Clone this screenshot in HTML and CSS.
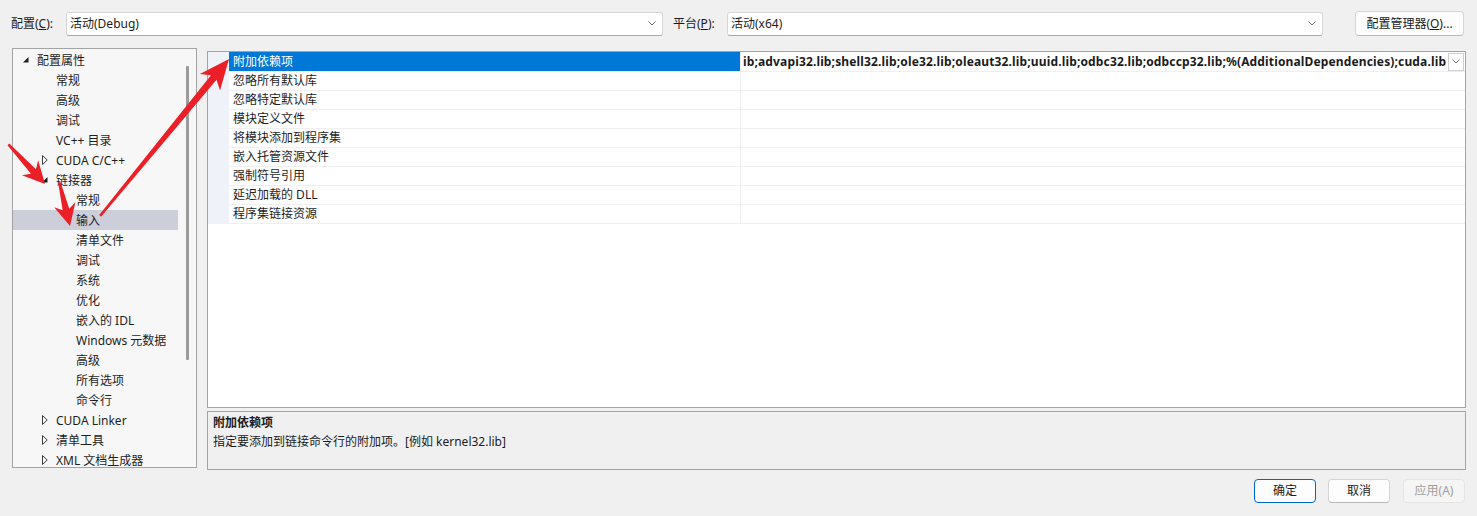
FILE: index.html
```html
<!DOCTYPE html>
<html lang="zh-CN">
<head>
<meta charset="utf-8">
<title>属性页</title>
<link rel="stylesheet" href="styles.css">
</head>
<body>
<div class="dialog">
  <div class="toolbar">
    <span class="lbl lbl-config">配置(<u>C</u>):</span>
    <div class="combo combo-config">
      <span class="combo-text">活动(Debug)</span>
      <svg class="chev" width="8" height="5" viewBox="0 0 8 5"><polyline points="0.5,0.5 4,4 7.5,0.5" fill="none" stroke="#707070" stroke-width="1"/></svg>
    </div>
    <span class="lbl lbl-platform">平台(<u>P</u>):</span>
    <div class="combo combo-platform">
      <span class="combo-text">活动(x64)</span>
      <svg class="chev" width="8" height="5" viewBox="0 0 8 5"><polyline points="0.5,0.5 4,4 7.5,0.5" fill="none" stroke="#707070" stroke-width="1"/></svg>
    </div>
    <button class="btn btn-manager">配置管理器(<u>O</u>)...</button>
  </div>

  <div class="main">
    <div class="tree">
      <ul class="tree-list">
        <li class="node l0"><span class="tg"><svg width="6" height="6" viewBox="0 0 6 6"><polygon points="5.5,0 5.5,5.5 0,5.5" fill="#1e1e1e"/></svg></span><span>配置属性</span></li>
        <li class="node l1"><span class="tg"></span><span>常规</span></li>
        <li class="node l1"><span class="tg"></span><span>高级</span></li>
        <li class="node l1"><span class="tg"></span><span>调试</span></li>
        <li class="node l1"><span class="tg"></span><span>VC++ 目录</span></li>
        <li class="node l1"><span class="tg"><svg width="6" height="10" viewBox="0 0 6 10"><polygon points="0.5,0.5 5.2,5 0.5,9.5" fill="none" stroke="#3a3a3a" stroke-width="1"/></svg></span><span>CUDA C/C++</span></li>
        <li class="node l1"><span class="tg"><svg width="6" height="6" viewBox="0 0 6 6"><polygon points="5.5,0 5.5,5.5 0,5.5" fill="#1e1e1e"/></svg></span><span>链接器</span></li>
        <li class="node l2"><span class="tg"></span><span>常规</span></li>
        <li class="node l2 selected"><span class="tg"></span><span>输入</span></li>
        <li class="node l2"><span class="tg"></span><span>清单文件</span></li>
        <li class="node l2"><span class="tg"></span><span>调试</span></li>
        <li class="node l2"><span class="tg"></span><span>系统</span></li>
        <li class="node l2"><span class="tg"></span><span>优化</span></li>
        <li class="node l2"><span class="tg"></span><span>嵌入的 IDL</span></li>
        <li class="node l2"><span class="tg"></span><span>Windows 元数据</span></li>
        <li class="node l2"><span class="tg"></span><span>高级</span></li>
        <li class="node l2"><span class="tg"></span><span>所有选项</span></li>
        <li class="node l2"><span class="tg"></span><span>命令行</span></li>
        <li class="node l1"><span class="tg"><svg width="6" height="10" viewBox="0 0 6 10"><polygon points="0.5,0.5 5.2,5 0.5,9.5" fill="none" stroke="#3a3a3a" stroke-width="1"/></svg></span><span>CUDA Linker</span></li>
        <li class="node l1"><span class="tg"><svg width="6" height="10" viewBox="0 0 6 10"><polygon points="0.5,0.5 5.2,5 0.5,9.5" fill="none" stroke="#3a3a3a" stroke-width="1"/></svg></span><span>清单工具</span></li>
        <li class="node l1"><span class="tg"><svg width="6" height="10" viewBox="0 0 6 10"><polygon points="0.5,0.5 5.2,5 0.5,9.5" fill="none" stroke="#3a3a3a" stroke-width="1"/></svg></span><span>XML 文档生成器</span></li>
      </ul>
      <div class="tree-scroll"><div class="thumb"></div></div>
    </div>

    <div class="right">
      <div class="grid">
        <div class="prow active">
          <div class="gutter"></div>
          <div class="pname">附加依赖项</div>
          <div class="pvalue">
            <span class="vtext">ib;advapi32.lib;shell32.lib;ole32.lib;oleaut32.lib;uuid.lib;odbc32.lib;odbccp32.lib;%(AdditionalDependencies);cuda.lib</span>
            <span class="dd"><svg width="8" height="5" viewBox="0 0 8 5"><polyline points="0.5,0.5 4,4 7.5,0.5" fill="none" stroke="#707070" stroke-width="1"/></svg></span>
          </div>
        </div>
        <div class="prow"><div class="gutter"></div><div class="pname">忽略所有默认库</div><div class="pvalue"></div></div>
        <div class="prow"><div class="gutter"></div><div class="pname">忽略特定默认库</div><div class="pvalue"></div></div>
        <div class="prow"><div class="gutter"></div><div class="pname">模块定义文件</div><div class="pvalue"></div></div>
        <div class="prow"><div class="gutter"></div><div class="pname">将模块添加到程序集</div><div class="pvalue"></div></div>
        <div class="prow"><div class="gutter"></div><div class="pname">嵌入托管资源文件</div><div class="pvalue"></div></div>
        <div class="prow"><div class="gutter"></div><div class="pname">强制符号引用</div><div class="pvalue"></div></div>
        <div class="prow"><div class="gutter"></div><div class="pname">延迟加载的 DLL</div><div class="pvalue"></div></div>
        <div class="prow"><div class="gutter"></div><div class="pname">程序集链接资源</div><div class="pvalue"></div></div>
      </div>
      <div class="desc">
        <div class="desc-title">附加依赖项</div>
        <div class="desc-text">指定要添加到链接命令行的附加项。[例如 kernel32.lib]</div>
      </div>
    </div>
  </div>

  <div class="footer">
    <button class="btn btn-ok">确定</button>
    <button class="btn btn-cancel">取消</button>
    <button class="btn btn-apply" disabled>应用(A)</button>
  </div>

  <svg class="annot" width="1477" height="516" viewBox="0 0 1477 516">
    <g fill="#ea1f28">
      <polygon transform="translate(45,184) rotate(47.3)" points="0,0 -22,11 -17,3.4 -54,1.2 -54,-1.2 -17,-3.4 -22,-11"/>
      <polygon transform="translate(70,226) rotate(76.3)" points="0,0 -22,11 -17,3.4 -45,1.2 -45,-1.2 -17,-3.4 -22,-11"/>
      <polygon transform="translate(229,59) rotate(-50.6)" points="0,0 -30,13 -24,3.6 -203,1.2 -203,-1.2 -24,-3.6 -30,-13"/>
    </g>
  </svg>
</div>
</body>
</html>
```

FILE: styles.css
```css
* { box-sizing: border-box; }

html, body {
  margin: 0;
  padding: 0;
}

body {
  background: #f0f0f0;
  font-family: "Noto Sans", "Noto Sans CJK SC", sans-serif;
  font-size: 12px;
  color: #1b1b1b;
}

.dialog {
  position: relative;
  width: 1477px;
  height: 516px;
  overflow: hidden;
}

/* top configuration bar */
.toolbar {
  display: flex;
  align-items: center;
  height: 25px;
  margin-top: 11px;
  padding-left: 11px;
}

.lbl { white-space: nowrap; line-height: 24px; }
.lbl-config { width: 55px; }
.lbl-platform { width: 54px; margin-left: 10px; }

.combo {
  display: flex;
  align-items: center;
  justify-content: space-between;
  height: 24px;
  background: #fff;
  border: 1px solid #d6d6d6;
  border-bottom-color: #a8a8a8;
  border-radius: 3px;
  padding: 0 6px 0 3px;
}
.combo-config { width: 597px; }
.combo-platform { width: 596px; }
.combo-text { line-height: 22px; }
.chev { display: block; }

.btn {
  font-family: inherit;
  font-size: 12px;
  color: #1b1b1b;
  background: #fdfdfd;
  border: 1px solid #d5d5d5;
  border-bottom-color: #b8b8b8;
  border-radius: 4px;
  padding: 0;
  height: 24px;
  line-height: 20px;
}
.btn-manager {
  width: 109px;
  height: 25px;
  margin-left: 32px;
}

/* main area */
.main {
  display: flex;
  gap: 10px;
  margin-top: 12px;
  padding: 0 11px 0 12px;
}

.tree {
  display: flex;
  width: 185px;
  height: 420px;
  background: #f7f7f7;
  border: 1px solid #a3a3a3;
  overflow: hidden;
}

.tree-list {
  list-style: none;
  margin: 0;
  padding: 1px 0 0 0;
  width: 165px;
}

.node {
  display: flex;
  align-items: center;
  height: 20px;
  white-space: nowrap;
  color: #1e1e1e;
}
.node.l0 { padding-left: 9px; }
.node.l1 { padding-left: 28px; }
.node.l2 { padding-left: 48px; }
.node.selected { background: #ccceda; }

.tg {
  display: flex;
  align-items: center;
  width: 15px;
  height: 20px;
  padding-left: 1px;
}
.tg svg { display: block; }

.tree-scroll {
  position: relative;
  flex: 1;
}
.thumb {
  position: absolute;
  left: 8px;
  top: 17px;
  width: 3px;
  height: 294px;
  background: #9b9b9b;
  border-radius: 1px;
}

.right {
  flex: 1;
  display: flex;
  flex-direction: column;
  gap: 3px;
  margin-top: 3px;
}

/* property grid */
.grid {
  height: 357px;
  background: #fff;
  border: 1px solid #a3a3a3;
}

.prow {
  display: grid;
  grid-template-columns: 21px 512px 1fr;
  height: 19px;
}

.gutter { background: #eff3f9; }

.pname {
  border-right: 1px solid #eeeeee;
  border-bottom: 1px solid #efefef;
  padding-left: 4px;
  line-height: 19px;
  white-space: nowrap;
  color: #1e1e1e;
}
.pvalue {
  display: flex;
  align-items: center;
  border-bottom: 1px solid #efefef;
  padding-left: 2px;
  min-width: 0;
}

.prow.active .pname {
  background: #0078d7;
  color: #fff;
}

.vtext {
  flex: 1;
  min-width: 0;
  overflow: hidden;
  white-space: nowrap;
  font-weight: bold;
  letter-spacing: 0.145px;
  line-height: 18px;
  color: #1b1b1b;
}

.dd {
  display: flex;
  align-items: center;
  justify-content: center;
  width: 16px;
  height: 18px;
  margin-right: 1px;
  background: #fff;
  border: 1px solid #cfcfcf;
}

/* description pane */
.desc {
  height: 59px;
  border: 1px solid #a3a3a3;
  background: #f0f0f0;
  padding: 1px 5px 0;
  line-height: 19px;
}
.desc-title { font-weight: bold; }

/* dialog buttons */
.footer {
  display: flex;
  justify-content: flex-end;
  gap: 12px;
  margin-top: 9px;
  padding-right: 12px;
}
.footer .btn { width: 62px; }
.btn-ok { border: 1px solid #0067c0; }
.btn-apply {
  margin-left: 1px;
  background: #f5f5f5;
  color: #a0a0a0;
  border-color: #e5e5e5;
}

/* red annotation arrows */
.annot {
  position: absolute;
  left: 0;
  top: 0;
  pointer-events: none;
}
```
